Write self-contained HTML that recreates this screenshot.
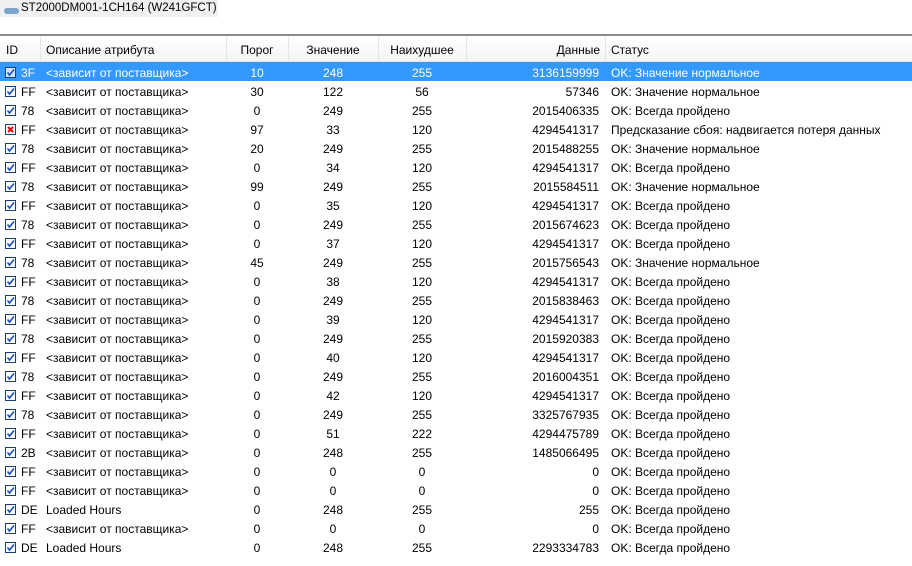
<html><head><style>
body{margin:0;width:912px;height:566px;background:#fff;font-family:"Liberation Sans",sans-serif;font-size:12px;color:#000;overflow:hidden;position:relative}
.t{position:absolute;left:0;top:0;width:218px;height:17px;background:#f0f0f0}
.t span{position:absolute;left:21px;top:2px;font-size:11.5px;white-space:nowrap}
.disk{position:absolute;left:4px;top:8px;width:15px;height:6px;background:#7aa4c8;border-radius:3px}
.line{position:absolute;left:0;top:34px;width:912px;height:2px;background:#8c8c8c}
.hd{position:absolute;left:0;top:37px;width:912px;height:24px;background:linear-gradient(#fff,#f3f4f6);border-bottom:1px solid #e4e6ea}
.hd .c{top:6px}
.c{position:absolute;white-space:nowrap}
.sep{position:absolute;top:0;width:1px;height:24px;background:#e3e5e8}
.r{position:absolute;left:0;width:912px;height:19px}
.r .c{top:4px}
.sel{background:#3399ff;color:#fff}
.cb{position:absolute;left:5px;top:5px;width:11px;height:11px;border:1px solid #1c3f73;background:#fff;box-sizing:border-box}
.cb svg{position:absolute;left:0;top:0}
</style></head><body>
<div class="t"><div class="disk"></div><span>ST2000DM001-1CH164 (W241GFCT)</span></div>
<div class="line"></div>
<div class="hd">
<div class="c" style="left:6px">ID</div>
<div class="c" style="left:46px">Описание атрибута</div>
<div class="c" style="left:226px;width:62px;text-align:center">Порог</div>
<div class="c" style="left:288px;width:90px;text-align:center">Значение</div>
<div class="c" style="left:378px;width:88px;text-align:center">Наихудшее</div>
<div class="c" style="left:466px;width:134px;text-align:right">Данные</div>
<div class="c" style="left:611px">Статус</div>
<div class="sep" style="left:40px"></div><div class="sep" style="left:226px"></div><div class="sep" style="left:288px"></div><div class="sep" style="left:378px"></div><div class="sep" style="left:466px"></div><div class="sep" style="left:605px"></div>
</div>
<div id="rows"></div>
<script>
var d=[["3F","<зависит от поставщика>",10,248,255,"3136159999","OK: Значение нормальное"],
["FF","<зависит от поставщика>",30,122,56,"57346","OK: Значение нормальное"],
["78","<зависит от поставщика>",0,249,255,"2015406335","OK: Всегда пройдено"],
["FF","<зависит от поставщика>",97,33,120,"4294541317","Предсказание сбоя: надвигается потеря данных"],
["78","<зависит от поставщика>",20,249,255,"2015488255","OK: Значение нормальное"],
["FF","<зависит от поставщика>",0,34,120,"4294541317","OK: Всегда пройдено"],
["78","<зависит от поставщика>",99,249,255,"2015584511","OK: Значение нормальное"],
["FF","<зависит от поставщика>",0,35,120,"4294541317","OK: Всегда пройдено"],
["78","<зависит от поставщика>",0,249,255,"2015674623","OK: Всегда пройдено"],
["FF","<зависит от поставщика>",0,37,120,"4294541317","OK: Всегда пройдено"],
["78","<зависит от поставщика>",45,249,255,"2015756543","OK: Значение нормальное"],
["FF","<зависит от поставщика>",0,38,120,"4294541317","OK: Всегда пройдено"],
["78","<зависит от поставщика>",0,249,255,"2015838463","OK: Всегда пройдено"],
["FF","<зависит от поставщика>",0,39,120,"4294541317","OK: Всегда пройдено"],
["78","<зависит от поставщика>",0,249,255,"2015920383","OK: Всегда пройдено"],
["FF","<зависит от поставщика>",0,40,120,"4294541317","OK: Всегда пройдено"],
["78","<зависит от поставщика>",0,249,255,"2016004351","OK: Всегда пройдено"],
["FF","<зависит от поставщика>",0,42,120,"4294541317","OK: Всегда пройдено"],
["78","<зависит от поставщика>",0,249,255,"3325767935","OK: Всегда пройдено"],
["FF","<зависит от поставщика>",0,51,222,"4294475789","OK: Всегда пройдено"],
["2B","<зависит от поставщика>",0,248,255,"1485066495","OK: Всегда пройдено"],
["FF","<зависит от поставщика>",0,0,0,"0","OK: Всегда пройдено"],
["FF","<зависит от поставщика>",0,0,0,"0","OK: Всегда пройдено"],
["DE","Loaded Hours",0,248,255,"255","OK: Всегда пройдено"],
["FF","<зависит от поставщика>",0,0,0,"0","OK: Всегда пройдено"],
["DE","Loaded Hours",0,248,255,"2293334783","OK: Всегда пройдено"]];
function e(s){return String(s).replace(/</g,"&lt;").replace(/>/g,"&gt;")}
var h="";
d.forEach(function(r,i){
var ck=i==3?'<svg width="9" height="9"><path d="M2 2L7 7M7 2L2 7" stroke="#e00" stroke-width="2"/></svg>':'<svg width="9" height="9"><path d="M1.5 4.5L3.5 7L8 1.5" stroke="#2050c0" stroke-width="1.7" fill="none"/></svg>';
h+='<div class="r'+(i==0?' sel':'')+'" style="top:'+(62+i*19)+'px"><div class="cb"'+(i==0?' style="background:#cfe4ff"':'')+'>'+ck+'</div>'+
'<div class="c" style="left:21px">'+r[0]+'</div><div class="c" style="left:46px">'+e(r[1])+'</div>'+
'<div class="c" style="left:226px;width:62px;text-align:center">'+r[2]+'</div>'+
'<div class="c" style="left:288px;width:90px;text-align:center">'+r[3]+'</div>'+
'<div class="c" style="left:378px;width:88px;text-align:center">'+r[4]+'</div>'+
'<div class="c" style="left:466px;width:133px;text-align:right">'+r[5]+'</div>'+
'<div class="c" style="left:611px">'+r[6]+'</div></div>';});
document.getElementById("rows").innerHTML=h;
</script>
</body></html>
